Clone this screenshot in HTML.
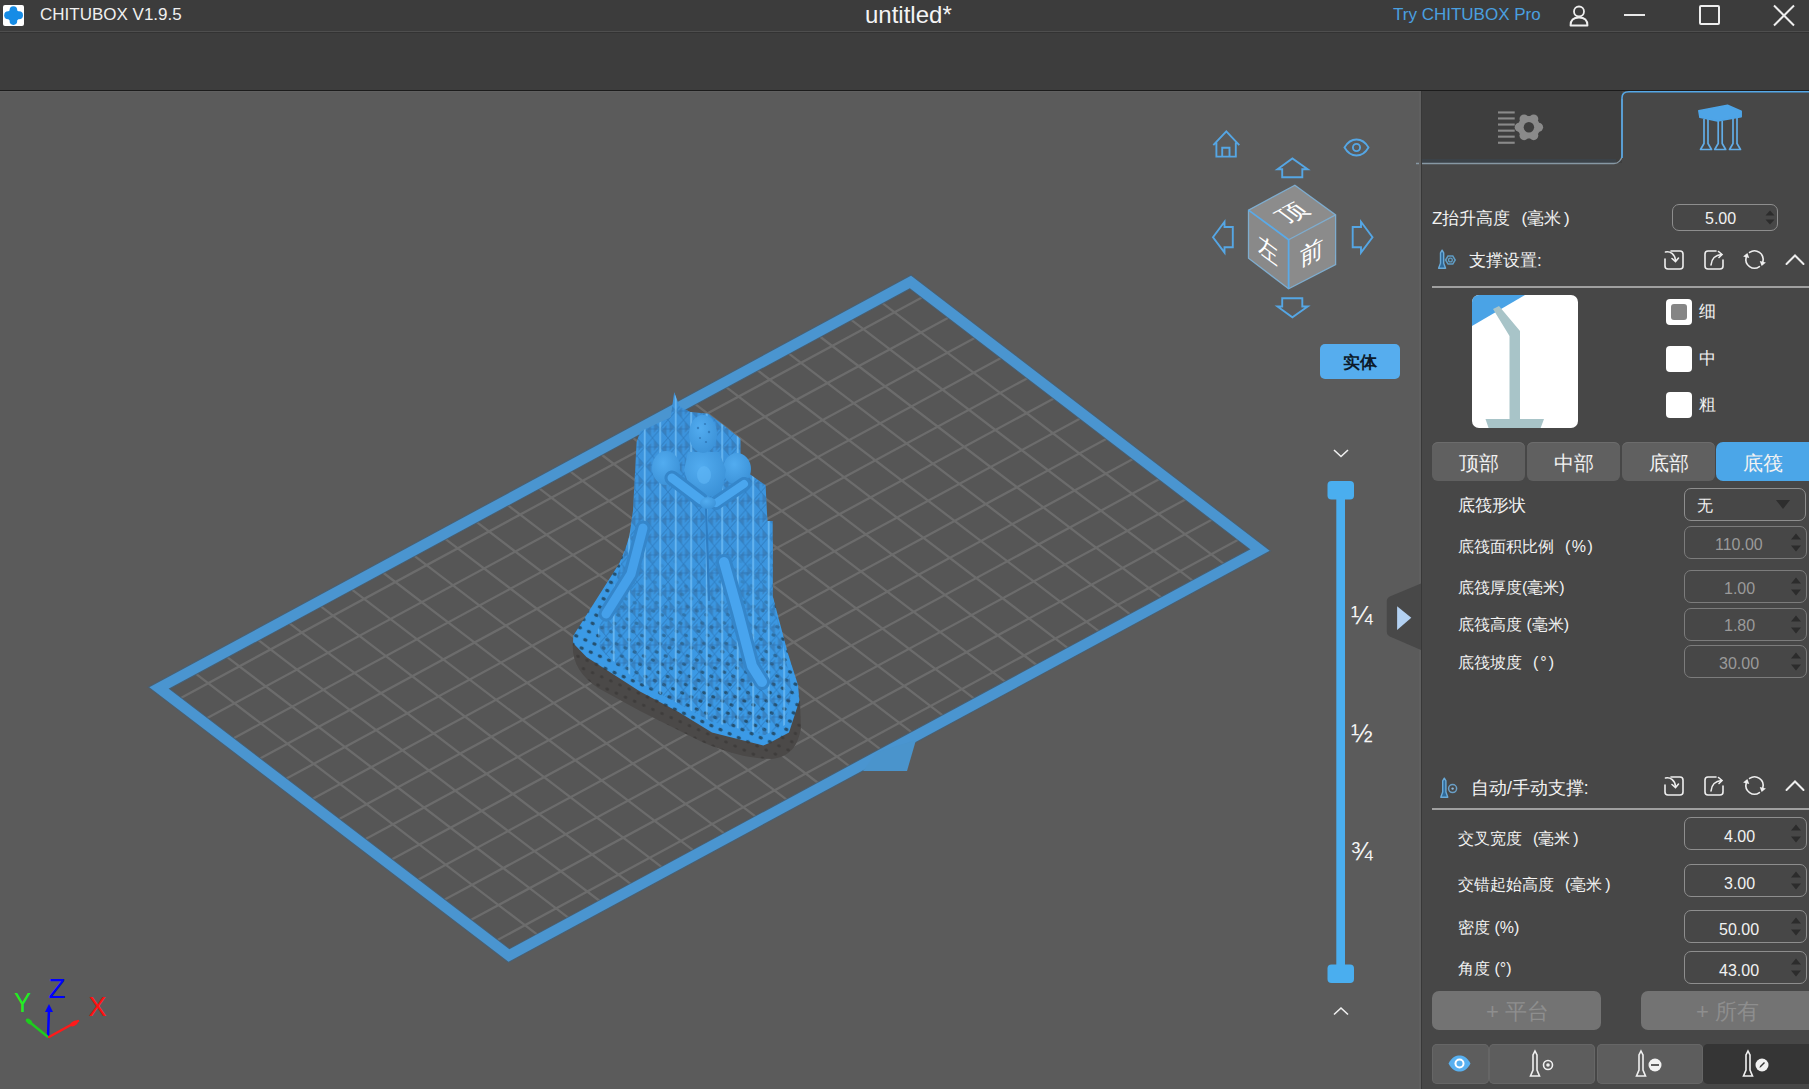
<!DOCTYPE html>
<html><head><meta charset="utf-8">
<style>
*{margin:0;padding:0;box-sizing:border-box}
html,body{width:1809px;height:1089px;overflow:hidden;background:#5b5b5b;font-family:"Liberation Sans",sans-serif;color:#f2f2f2}
.a{position:absolute}
.t{position:absolute;white-space:nowrap;line-height:1}
#title{left:0;top:0;width:1809px;height:31px;background:#3c3c3c}
#tline{left:0;top:31px;width:1809px;height:1px;background:#4e4e4e;box-shadow:0 1px 0 #333}
#tool{left:0;top:33px;width:1809px;height:57px;background:#3d3d3d}
#tdark{left:0;top:90px;width:1809px;height:1px;background:#1c1c1c}
#view{left:0;top:91px;width:1421px;height:998px;background:#5b5b5b}
#panel{left:1421px;top:91px;width:388px;height:998px;background:#474747}
</style></head><body>
<div id="title" class="a"></div>
<div id="tline" class="a"></div>
<div id="tool" class="a"></div>
<div id="tdark" class="a"></div>
<!--TITLE-->
<div class="a" style="left:3px;top:5px;width:21px;height:21px;background:#fff;border-radius:2px"></div>
<svg class="a" style="left:3px;top:5px" width="21" height="21" viewBox="0 0 21 21"><g fill="#168ce6"><rect x="1.2" y="6.3" width="18.8" height="8" rx="4"/><rect x="6.6" y="1.3" width="7.6" height="18.6" rx="3.8"/><circle cx="10.4" cy="10.3" r="6.2"/></g></svg>
<div class="t" style="left:40px;top:6px;font-size:17px;color:#f0f0f0">CHITUBOX V1.9.5</div>
<div class="t" style="left:865px;top:3px;font-size:24px;color:#f4f4f4">untitled*</div>
<div class="t" style="left:1393px;top:6px;font-size:17px;color:#4aa0e0">Try CHITUBOX Pro</div>
<svg class="a" style="left:1566px;top:4px" width="26" height="24" viewBox="0 0 26 24" fill="none" stroke="#eeeeee" stroke-width="1.8"><circle cx="13" cy="7.5" r="5"/><path d="M4.5 21.5 C4.5 15.5 8 13.5 13 13.5 C18 13.5 21.5 15.5 21.5 21.5 Z" stroke-linejoin="round"/></svg>
<div class="a" style="left:1624px;top:14px;width:21px;height:2px;background:#e8e8e8"></div>
<div class="a" style="left:1699px;top:5px;width:21px;height:20px;border:2px solid #eeeeee;border-radius:2px"></div>
<svg class="a" style="left:1772px;top:4px" width="24" height="23" viewBox="0 0 24 23" stroke="#eeeeee" stroke-width="2"><path d="M2 1.5L22 21.5M22 1.5L2 21.5"/></svg>
<!--/TITLE-->

<div id="view" class="a"></div>
<div id="panel" class="a"></div>
<!--PANEL-->
<svg class="a" style="left:1410px;top:85px" width="399" height="90" viewBox="1410 85 399 90">
<rect x="1421" y="91" width="201" height="72" fill="#3e3e3e"/>
<rect x="1421" y="159" width="195" height="4" fill="#3b4248"/>
<path d="M1416 163.5H1614C1618 163.5 1622 160 1622 155V99" fill="none" stroke="#8798a4" stroke-width="1.3"/>
<path d="M1622 158V98C1622 94 1624.5 91.8 1629 91.8H1809" fill="none" stroke="#55a8e8" stroke-width="1.6"/>
</svg>
<div class="a" style="left:1421px;top:91px;width:1px;height:998px;background:#383838"></div><div class="a" style="left:1419px;top:91px;width:2px;height:998px;background:#5f5f5f"></div><div class="a" style="left:0;top:91px;width:1421px;height:1px;background:#606060"></div>

<svg class="a" style="left:1490px;top:100px" width="60" height="55" viewBox="0 0 60 55">
<g fill="#8a8a8a"><rect x="8" y="11.4" width="16.7" height="2.1"/><rect x="8" y="17.4" width="16.7" height="2.1"/><rect x="8" y="23.5" width="16.7" height="2.1"/><rect x="8" y="29.6" width="16.7" height="2.1"/><rect x="8" y="35.6" width="16.7" height="2.1"/><rect x="8" y="41.7" width="16.7" height="2.1"/><circle cx="38.90" cy="27.30" r="11.2"/><circle cx="48.50" cy="27.30" r="4.6"/><circle cx="43.70" cy="35.61" r="4.6"/><circle cx="34.10" cy="35.61" r="4.6"/><circle cx="29.30" cy="27.30" r="4.6"/><circle cx="34.10" cy="18.99" r="4.6"/><circle cx="43.70" cy="18.99" r="4.6"/></g><circle cx="38.90" cy="27.30" r="5.2" fill="#3e3e3e"/>
</svg>
<svg class="a" style="left:1695px;top:102px" width="50" height="52" viewBox="0 0 50 52">
<g fill="none" stroke="#62ace6" stroke-width="1.7" stroke-linejoin="round"><path d="M9 17 V41.5 L5.5 47.5 H16.5 L13 41.5 V17"/><path d="M23.2 19 V41.5 L19.7 47.5 H30.7 L27.2 41.5 V19"/><path d="M38 15 V41.5 L34.5 47.5 H45.5 L42 41.5 V15"/></g>
<path d="M32.5 3.2 L3.8 8.7 L4.9 15.3 L22.5 19.1 L46.2 14.7 L46.2 9.2 Z" fill="#4ea5e8" stroke="#4ea5e8" stroke-width="1.5" stroke-linejoin="round"/>
</svg>

<div class="t" style="left:1432px;top:210px;font-size:17px">Z抬升高度<span style="margin-left:11px">(</span>毫米<span style="margin-left:3px">)</span></div>
<div class="a" style="left:1672px;top:204px;width:106px;height:27px;border:1.5px solid #8e8e8e;border-radius:7px"></div>
<div class="t" style="left:1705px;top:211px;font-size:16px">5.00</div>
<svg class="a" style="left:1764px;top:209px" width="12" height="18" viewBox="0 0 12 18" fill="#2c2c2c"><path d="M1.5 6.5L6 1.5L10.5 6.5Z M1.5 10.5L6 15.5L10.5 10.5Z"/></svg>

<!-- section header 1 -->
<svg class="a" style="left:1436px;top:248px" width="22" height="23" viewBox="0 0 22 23"><path d="M6.1 2.2 L7.7 4.8 V15.2 L9.6 20.2 H2.6 L4.5 15.2 V4.8 Z" fill="#2f6a9a" stroke="#6aaad8" stroke-width="1.4" stroke-linejoin="round"/><path d="M9.6 12L12 8 H16.8 L19.2 12 L16.8 16 H12 Z" fill="none" stroke="#5f9cc4" stroke-width="1.5"/><circle cx="14.4" cy="12" r="1.9" fill="none" stroke="#5f9cc4" stroke-width="1.3"/></svg>
<div class="t" style="left:1469px;top:252px;font-size:17px">支撑设置:</div>
<!-- header icons -->
<svg class="a" style="left:1663px;top:248px" width="144" height="24" viewBox="0 0 144 24" fill="none" stroke="#eeeeee" stroke-width="1.6" stroke-linecap="round">
<path d="M8 3 H17 A3 3 0 0 1 20 6 V18 A3 3 0 0 1 17 21 H5 A3 3 0 0 1 2 18 V11"/><path d="M2.5 4 C7 3 12 6 12.5 12.5"/><path d="M9 10.5 L12.5 13.5 L15.5 10"/>
<g transform="translate(40,0)"><path d="M13 3 H5 A3 3 0 0 0 2 6 V18 A3 3 0 0 0 5 21 H17 A3 3 0 0 0 20 18 V12"/><path d="M8 17 C8.5 11 12.5 7 18.5 6.5"/><path d="M15.5 3.5 L19 6.5 L16 9.5"/></g>
<g transform="translate(80,0)"><path d="M6.57 4.46A8.6 8.6 0 0 1 19.81 13.73"/><path d="M16.43 18.54A8.6 8.6 0 0 1 3.19 9.27"/><polygon points="22.90,14.55 16.72,12.90 18.64,18.07" fill="#eeeeee" stroke="none"/><polygon points="0.10,8.45 6.28,10.10 4.36,4.93" fill="#eeeeee" stroke="none"/></g>
<g transform="translate(121,0)"><path d="M2.5 16 L11 7.5 L19.5 16" stroke-width="2"/></g>
</svg>
<div class="a" style="left:1432px;top:286px;width:377px;height:1.5px;background:#a0a0a0"></div>

<!-- preview -->
<svg class="a" style="left:1472px;top:295px" width="106" height="133" viewBox="0 0 106 133">
<defs><clipPath id="pc"><rect width="106" height="133" rx="7"/></clipPath></defs>
<g clip-path="url(#pc)"><rect width="106" height="133" fill="#ffffff"/>
<polygon points="0,0 53,0 0,31" fill="#4aa3e6"/>
<polygon points="21,14 27,11 48,36 48,124 37.5,124 37.5,41" fill="#a8c4c8"/>
<polygon points="13.5,124 72,124 66,140 19,140" fill="#a8c4c8"/></g>
</svg>
<!-- checkboxes -->
<div class="a" style="left:1666px;top:299px;width:26px;height:26px;background:#fff;border-radius:4px"></div>
<div class="a" style="left:1671px;top:304px;width:16px;height:16px;background:#858585;border-radius:3px"></div>
<div class="a" style="left:1666px;top:346px;width:26px;height:26px;background:#fff;border-radius:4px"></div>
<div class="a" style="left:1666px;top:392px;width:26px;height:26px;background:#fff;border-radius:4px"></div>
<div class="t" style="left:1699px;top:303px;font-size:17px">细</div>
<div class="t" style="left:1699px;top:350px;font-size:17px">中</div>
<div class="t" style="left:1699px;top:396px;font-size:17px">粗</div>

<!-- segmented -->
<div class="a" style="left:1432px;top:442px;width:93px;height:39px;background:#606060;border-radius:6px;box-shadow:inset 0 1px 0 #6c6c6c"></div>
<div class="a" style="left:1527px;top:442px;width:93px;height:39px;background:#606060;border-radius:6px;box-shadow:inset 0 1px 0 #6c6c6c"></div>
<div class="a" style="left:1622px;top:442px;width:93px;height:39px;background:#606060;border-radius:6px;box-shadow:inset 0 1px 0 #6c6c6c"></div>
<div class="a" style="left:1716px;top:442px;width:100px;height:39px;background:#4ba6e8;border-radius:7px"></div>
<div class="t" style="left:1459px;top:453px;font-size:20px">顶部</div>
<div class="t" style="left:1554px;top:453px;font-size:20px">中部</div>
<div class="t" style="left:1649px;top:453px;font-size:20px">底部</div>
<div class="t" style="left:1743px;top:453px;font-size:20px">底筏</div>

<!-- raft rows -->
<div class="t" style="left:1458px;top:497px;font-size:16.5px">底筏形状</div>
<div class="a" style="left:1684px;top:488px;width:122px;height:33px;border:1.5px solid #8e8e8e;border-radius:7px"></div>
<div class="t" style="left:1697px;top:498px;font-size:16px">无</div>
<svg class="a" style="left:1774px;top:498px" width="18" height="13" viewBox="0 0 18 13"><path d="M2 2H16L9 11Z" fill="#2e2e2e"/></svg>

<div class="t" style="left:1458px;top:539px;font-size:16px">底筏面积比例<span style="margin-left:11px;letter-spacing:1.5px">(%)</span></div>
<div class="a" style="left:1684px;top:526px;width:123px;height:33px;border:1.5px solid #7c7c7c;border-radius:7px"></div>
<div class="t" style="left:1715px;top:537px;font-size:16px;color:#9a9a9a">110.00</div>
<svg class="a" style="left:1789px;top:531px" width="14" height="23" viewBox="0 0 14 23" fill="#2c2c2c"><path d="M2 8.5L7 2.5L12 8.5Z M2 14.5L7 20.5L12 14.5Z"/></svg>

<div class="t" style="left:1458px;top:580px;font-size:16px">底筏厚度(毫米)</div>
<div class="a" style="left:1684px;top:570px;width:123px;height:33px;border:1.5px solid #7c7c7c;border-radius:7px"></div>
<div class="t" style="left:1724px;top:581px;font-size:16px;color:#9a9a9a">1.00</div>
<svg class="a" style="left:1789px;top:575px" width="14" height="23" viewBox="0 0 14 23" fill="#2c2c2c"><path d="M2 8.5L7 2.5L12 8.5Z M2 14.5L7 20.5L12 14.5Z"/></svg>

<div class="t" style="left:1458px;top:617px;font-size:16px">底筏高度 (毫米)</div>
<div class="a" style="left:1684px;top:608px;width:123px;height:33px;border:1.5px solid #7c7c7c;border-radius:7px"></div>
<div class="t" style="left:1724px;top:618px;font-size:16px;color:#9a9a9a">1.80</div>
<svg class="a" style="left:1789px;top:613px" width="14" height="23" viewBox="0 0 14 23" fill="#2c2c2c"><path d="M2 8.5L7 2.5L12 8.5Z M2 14.5L7 20.5L12 14.5Z"/></svg>

<div class="t" style="left:1458px;top:655px;font-size:16px">底筏坡度<span style="margin-left:11px;letter-spacing:2px">(°)</span></div>
<div class="a" style="left:1684px;top:645px;width:123px;height:33px;border:1.5px solid #7c7c7c;border-radius:7px"></div>
<div class="t" style="left:1719px;top:656px;font-size:16px;color:#9a9a9a">30.00</div>
<svg class="a" style="left:1789px;top:650px" width="14" height="23" viewBox="0 0 14 23" fill="#2c2c2c"><path d="M2 8.5L7 2.5L12 8.5Z M2 14.5L7 20.5L12 14.5Z"/></svg>

<!-- section header 2 -->
<svg class="a" style="left:1438px;top:776px" width="22" height="24" viewBox="0 0 22 24"><path d="M6.3 2.2 L7.9 4.8 V16 L9.8 21.2 H2.8 L4.7 16 V4.8 Z" fill="#2f6a9a" stroke="#6aaad8" stroke-width="1.4" stroke-linejoin="round"/><circle cx="14.6" cy="12.6" r="4" fill="none" stroke="#6aa0c8" stroke-width="1.5"/><circle cx="14.6" cy="12.6" r="1.2" fill="#8ab8dc"/></svg>
<div class="t" style="left:1471px;top:780px;font-size:17.5px">自动/手动支撑:</div>
<svg class="a" style="left:1663px;top:774px" width="144" height="24" viewBox="0 0 144 24" fill="none" stroke="#eeeeee" stroke-width="1.6" stroke-linecap="round">
<path d="M8 3 H17 A3 3 0 0 1 20 6 V18 A3 3 0 0 1 17 21 H5 A3 3 0 0 1 2 18 V11"/><path d="M2.5 4 C7 3 12 6 12.5 12.5"/><path d="M9 10.5 L12.5 13.5 L15.5 10"/>
<g transform="translate(40,0)"><path d="M13 3 H5 A3 3 0 0 0 2 6 V18 A3 3 0 0 0 5 21 H17 A3 3 0 0 0 20 18 V12"/><path d="M8 17 C8.5 11 12.5 7 18.5 6.5"/><path d="M15.5 3.5 L19 6.5 L16 9.5"/></g>
<g transform="translate(80,0)"><path d="M6.57 4.46A8.6 8.6 0 0 1 19.81 13.73"/><path d="M16.43 18.54A8.6 8.6 0 0 1 3.19 9.27"/><polygon points="22.90,14.55 16.72,12.90 18.64,18.07" fill="#eeeeee" stroke="none"/><polygon points="0.10,8.45 6.28,10.10 4.36,4.93" fill="#eeeeee" stroke="none"/></g>
<g transform="translate(121,0)"><path d="M2.5 16 L11 7.5 L19.5 16" stroke-width="2"/></g>
</svg>
<div class="a" style="left:1432px;top:808px;width:377px;height:1.5px;background:#a0a0a0"></div>

<div class="t" style="left:1458px;top:831px;font-size:16px">交叉宽度<span style="margin-left:11px">(</span>毫米<span style="margin-left:3px">)</span></div>
<div class="a" style="left:1684px;top:817px;width:123px;height:33px;border:1.5px solid #8e8e8e;border-radius:7px"></div>
<div class="t" style="left:1724px;top:829px;font-size:16px">4.00</div>
<svg class="a" style="left:1789px;top:822px" width="14" height="23" viewBox="0 0 14 23" fill="#2c2c2c"><path d="M2 8.5L7 2.5L12 8.5Z M2 14.5L7 20.5L12 14.5Z"/></svg>

<div class="t" style="left:1458px;top:877px;font-size:16px">交错起始高度<span style="margin-left:11px">(</span>毫米<span style="margin-left:3px">)</span></div>
<div class="a" style="left:1684px;top:864px;width:123px;height:33px;border:1.5px solid #8e8e8e;border-radius:7px"></div>
<div class="t" style="left:1724px;top:876px;font-size:16px">3.00</div>
<svg class="a" style="left:1789px;top:869px" width="14" height="23" viewBox="0 0 14 23" fill="#2c2c2c"><path d="M2 8.5L7 2.5L12 8.5Z M2 14.5L7 20.5L12 14.5Z"/></svg>

<div class="t" style="left:1458px;top:920px;font-size:16px">密度 (%)</div>
<div class="a" style="left:1684px;top:910px;width:123px;height:33px;border:1.5px solid #8e8e8e;border-radius:7px"></div>
<div class="t" style="left:1719px;top:922px;font-size:16px">50.00</div>
<svg class="a" style="left:1789px;top:915px" width="14" height="23" viewBox="0 0 14 23" fill="#2c2c2c"><path d="M2 8.5L7 2.5L12 8.5Z M2 14.5L7 20.5L12 14.5Z"/></svg>

<div class="t" style="left:1458px;top:961px;font-size:16px">角度 (°)</div>
<div class="a" style="left:1684px;top:951px;width:123px;height:33px;border:1.5px solid #8e8e8e;border-radius:7px"></div>
<div class="t" style="left:1719px;top:963px;font-size:16px">43.00</div>
<svg class="a" style="left:1789px;top:956px" width="14" height="23" viewBox="0 0 14 23" fill="#2c2c2c"><path d="M2 8.5L7 2.5L12 8.5Z M2 14.5L7 20.5L12 14.5Z"/></svg>

<!-- buttons -->
<div class="a" style="left:1432px;top:991px;width:169px;height:39px;background:#737373;border-radius:7px"></div>
<div class="t" style="left:1486px;top:1001px;font-size:22px;color:#8e8e8e">+ 平台</div>
<div class="a" style="left:1641px;top:991px;width:175px;height:39px;background:#737373;border-radius:7px"></div>
<div class="t" style="left:1696px;top:1001px;font-size:22px;color:#8e8e8e">+ 所有</div>

<!-- bottom toolbar -->
<div class="a" style="left:1432px;top:1044px;width:57px;height:40px;background:#5d5d5d;border-radius:5px;box-shadow:inset 0 0 0 1px #666"></div>
<div class="a" style="left:1489px;top:1044px;width:106px;height:40px;background:#5d5d5d;border-radius:5px;box-shadow:inset 0 0 0 1px #666"></div>
<div class="a" style="left:1597px;top:1044px;width:106px;height:40px;background:#5d5d5d;border-radius:5px;box-shadow:inset 0 0 0 1px #666"></div>
<div class="a" style="left:1703px;top:1044px;width:110px;height:40px;background:#353535;border-radius:5px"></div>
<svg class="a" style="left:1447px;top:1054px" width="25" height="19" viewBox="0 0 25 19"><path d="M1.5 9.5 C5 3 9 1.5 12.5 1.5 C16 1.5 20 3 23.5 9.5 C20 16 16 17.5 12.5 17.5 C9 17.5 5 16 1.5 9.5Z" fill="#58b0f0"/><circle cx="12.5" cy="9.5" r="5" fill="#ffffff"/><circle cx="12.5" cy="9.5" r="3" fill="#58b0f0"/></svg>
<svg class="a" style="left:1529px;top:1049px" width="26" height="29" viewBox="0 0 26 29"><g fill="none" stroke="#f0f0f0" stroke-width="1.6"><path d="M6 2 L8 6 V21 L10.5 27 H1.5 L4 21 V6 Z"/><circle cx="19" cy="16" r="4.5"/></g><circle cx="19" cy="16" r="1.8" fill="#f0f0f0"/></svg>
<svg class="a" style="left:1635px;top:1049px" width="30" height="29" viewBox="0 0 30 29"><g fill="none" stroke="#f0f0f0" stroke-width="1.6"><path d="M6 2 L8 6 V21 L10.5 27 H1.5 L4 21 V6 Z"/></g><circle cx="20" cy="16" r="6.5" fill="#f0f0f0"/><rect x="16" y="15" width="8" height="2" fill="#5d5d5d"/></svg>
<svg class="a" style="left:1742px;top:1049px" width="30" height="29" viewBox="0 0 30 29"><g fill="none" stroke="#f0f0f0" stroke-width="1.6"><path d="M6 2 L8 6 V21 L10.5 27 H1.5 L4 21 V6 Z"/></g><circle cx="20" cy="16" r="6.5" fill="#f0f0f0"/><path d="M17.5 19 L18 17 L22 13 L23 14 L19 18 Z" fill="#353535"/></svg>
<!--/PANEL-->

<!--VIEW-->
<svg class="a" style="left:0;top:0" width="1421" height="1089" viewBox="0 0 1421 1089">
<polygon points="910.5,282 1260,550 509,955.5 159,688" fill="#565656"/>
<path d="M195.7 673.6L537.3 934.7M226.9 656.8L568.5 917.9M258.1 639.9L599.7 901.0M289.3 623.1L630.9 884.1M320.5 606.2L662.1 867.3M351.7 589.4L693.3 850.4M382.9 572.5L724.5 833.6M414.1 555.6L755.7 816.7M445.3 538.8L786.9 799.9M476.5 521.9L818.1 783.0M507.7 505.1L849.3 766.1M539.0 488.2L880.5 749.3M570.2 471.4L911.8 732.4M601.4 454.5L943.0 715.6M632.6 437.6L974.2 698.7M663.8 420.8L1005.4 681.9M695.0 403.9L1036.6 665.0M726.2 387.1L1067.8 648.1M757.4 370.2L1099.0 631.3M788.6 353.4L1130.2 614.4M819.8 336.5L1161.4 597.6M851.0 319.6L1192.6 580.7M882.2 302.8L1223.8 563.9M180.9 697.9L921.9 297.5M207.3 718.0L948.3 317.7M233.7 738.2L974.7 337.9M260.1 758.4L1001.0 358.1M286.5 778.6L1027.4 378.2M312.9 798.7L1053.8 398.4M339.3 818.9L1080.2 418.6M365.7 839.1L1106.6 438.8M392.1 859.3L1133.0 458.9M418.5 879.4L1159.4 479.1M444.8 899.6L1185.8 499.3M471.2 919.8L1212.2 519.5M497.6 940.0L1238.6 539.6" stroke="#6c6c6c" stroke-width="2.3" fill="none"/>
<polygon points="910.5,282 1260,550 509,955.5 159,688" fill="none" stroke="#44627a" stroke-width="12.5" stroke-linejoin="miter" opacity="0.8"/>
<polygon points="910.5,282 1260,550 509,955.5 159,688" fill="none" stroke="#4a95d0" stroke-width="10.5" stroke-linejoin="miter"/>
<polygon points="877,752 916,740 907,771 863,771" fill="#4a94cc"/>
<defs>
<pattern id="latp" width="15.5" height="18" patternUnits="userSpaceOnUse" x="637" y="420">
<path d="M1.5 2L6 7.5L1.5 13Z M14 5L9.5 10.5L14 16Z" fill="#34597e" opacity="0.32"/>
<path d="M0 0L7.75 9L0 18M15.5 0L7.75 9L15.5 18M0 9H15.5" stroke="#2a70b0" stroke-width="1" fill="none" opacity="0.55"/>
<rect x="7" y="0" width="1.4" height="18" fill="#7ac4f8" opacity="0.9"/>
</pattern>
<pattern id="holes" width="10" height="9" patternUnits="userSpaceOnUse" patternTransform="rotate(24)">
<rect width="10" height="9" fill="#3b9ae6"/>
<ellipse cx="5" cy="4.5" rx="2.2" ry="1.8" fill="#24506f"/>
</pattern>
<pattern id="sdots" width="10" height="9" patternUnits="userSpaceOnUse" patternTransform="rotate(24)">
<rect width="10" height="9" fill="#4b4948"/>
<ellipse cx="5" cy="4.5" rx="1.9" ry="1.5" fill="#3e3c3b"/>
</pattern>
<linearGradient id="basefade" x1="0" y1="400" x2="0" y2="700" gradientUnits="userSpaceOnUse">
<stop offset="0" stop-color="#3c93dc"/><stop offset="0.48" stop-color="#3c95de"/><stop offset="0.62" stop-color="#3b95de" stop-opacity="0.75"/><stop offset="0.85" stop-color="#3b95de" stop-opacity="0.3"/><stop offset="1" stop-color="#3b95de" stop-opacity="0"/>
</linearGradient>
<radialGradient id="fg" cx="0.4" cy="0.35" r="0.75"><stop offset="0" stop-color="#52acf0"/><stop offset="1" stop-color="#3a90d6"/></radialGradient>
</defs>
<!-- shadow -->
<path d="M573 642 C571 660 580 676 598 688 L640 711 L702 742 C730 754 752 759 772 759 C790 757 798 746 801 728 L800 700 L640 690 Z" fill="url(#sdots)"/>
<!-- raft -->
<polygon points="619.5,563 573.3,635.7 573,643 586.5,657 640,691.4 678.6,712 712,732.5 763.4,745.4 769.8,742.8 789,732.5 799.4,700.4 798,685 787.8,652.9 772.7,596 772.7,540 629,540" fill="url(#holes)"/>
<!-- lattice base -->
<polygon id="latpoly" points="674.2,392.2 679.6,406.5 690.4,411.9 708.3,413.7 722.6,424.4 740.5,438.7 740.5,467.4 765.6,485.3 767.4,521.1 772.7,521.1 772.7,596.3 782,640 792,690 785,725 765,735 712,722 640,683 600,650 598,630 610,600 629.5,535.4 633,510.4 636.6,442.3 640.2,431.6 670.7,417.2" fill="url(#basefade)"/>
<polygon points="674.2,392.2 679.6,406.5 690.4,411.9 708.3,413.7 722.6,424.4 740.5,438.7 740.5,467.4 765.6,485.3 767.4,521.1 772.7,521.1 772.7,596.3 782,640 792,690 785,725 765,735 712,722 640,683 600,650 598,630 610,600 629.5,535.4 633,510.4 636.6,442.3 640.2,431.6 670.7,417.2" fill="url(#latp)"/>
<!-- figure -->
<g stroke-linecap="round" stroke-linejoin="round" fill="none">
<path d="M643 528 L631 574 L606 614" stroke="#3586ca" stroke-width="15"/>
<path d="M643 528 L631 574 L606 614" stroke="#45a0ea" stroke-width="9"/>
<path d="M724 562 L738 612 L752 666 L762 682" stroke="#3586ca" stroke-width="16"/>
<path d="M724 562 L738 612 L752 666 L762 682" stroke="#48a4ee" stroke-width="10"/>
<path d="M706 506 L709 600" stroke="#2f7dc2" stroke-width="2.2"/>
</g>
<g fill="url(#fg)">
<ellipse cx="666" cy="468" rx="14" ry="17"/>
<ellipse cx="737" cy="469" rx="14" ry="16"/>
<path d="M688 452 L719 452 L726 470 L721 496 L692 496 L684 470 Z"/>
<ellipse cx="703" cy="434" rx="14" ry="19"/>
</g>
<g stroke-linecap="round" fill="none">
<path d="M672 478 L701 500" stroke="#3586ca" stroke-width="15"/>
<path d="M672 478 L701 500" stroke="#4aa6ee" stroke-width="9"/>
<path d="M744 484 L716 503" stroke="#3586ca" stroke-width="14"/>
<path d="M744 484 L716 503" stroke="#4aa6ee" stroke-width="8"/>
</g>
<ellipse cx="708" cy="503" rx="8" ry="6" fill="url(#fg)"/>
<ellipse cx="704" cy="475" rx="7" ry="9" fill="#60b8f6" opacity="0.6"/>
<g fill="#2a6eac" opacity="0.7"><circle cx="698" cy="428" r="1.2"/><circle cx="705" cy="424" r="1.1"/><circle cx="709" cy="432" r="1.2"/><circle cx="700" cy="438" r="1"/><circle cx="706" cy="442" r="1.1"/></g>
<!-- axis -->
<g stroke-linecap="round">
<line x1="48" y1="1037" x2="49" y2="1009" stroke="#0000ff" stroke-width="2.5"/>
<polygon points="45,1012 49,1004 53,1012" fill="#0000ff"/>
<line x1="48" y1="1037" x2="27" y2="1020" stroke="#1ecc1e" stroke-width="2.5"/><ellipse cx="29" cy="1021.5" rx="3.5" ry="2.2" transform="rotate(38 29 1021.5)" fill="#1ecc1e"/>
<line x1="49" y1="1037" x2="78" y2="1021" stroke="#ff1a1a" stroke-width="2.5"/><ellipse cx="74" cy="1023.5" rx="4" ry="2.3" transform="rotate(-28 74 1023.5)" fill="#ff1a1a"/>
</g>
<text x="14" y="1012" font-family="Liberation Sans" font-size="27.5" fill="#22ee22" textLength="17" lengthAdjust="spacingAndGlyphs">Y</text>
<text x="48.5" y="998" font-family="Liberation Sans" font-size="28.5" fill="#0000ff" textLength="17" lengthAdjust="spacingAndGlyphs">Z</text>
<text x="88.5" y="1015.5" font-family="Liberation Sans" font-size="27.5" fill="#ff1111" textLength="18" lengthAdjust="spacingAndGlyphs">X</text>
</svg>
<!--/VIEW-->
<!--NAV-->
<svg class="a" style="left:1190px;top:110px" width="231" height="979" viewBox="1190 110 231 979">
<g fill="none" stroke="#55a6e4" stroke-width="1.9" stroke-linejoin="miter">
<path d="M1213.3 145.1L1226.3 131.4L1239.3 145.1M1216.4 142.5V156.6H1235.8V142.5M1222.2 156.6V147.7H1229.5V156.6"/>
<path d="M1282.2 169.3H1277.5L1292.4 158.5L1307.7 169.3H1302.3V177.2H1282.2Z"/>
<path d="M1282.2 306.5H1277.5L1292.4 317.3L1307.7 306.5H1302.3V298.3H1282.2Z"/>
<path d="M1224.5 227V221.8L1213 237.2L1224.5 252.6V247.3H1232.8V227Z"/>
<path d="M1361 227V221.8L1372.5 237.2L1361 252.6V247.3H1352.7V227Z"/>
<path d="M1344.5 147.5C1348 141.5 1352 139.5 1356.5 139.5C1361 139.5 1365 141.5 1368.5 147.5C1365 153.5 1361 155.5 1356.5 155.5C1352 155.5 1348 153.5 1344.5 147.5Z"/>
<circle cx="1356.5" cy="147.5" r="3.6"/>
</g>
<!-- cube -->
<polygon points="1294.9,185.3 1248.5,210.1 1288.6,239.7 1335.6,214.9" fill="#8c8c8c"/>
<polygon points="1248.5,210.1 1288.6,239.7 1288.6,288.8 1248.5,258.2" fill="#898989"/>
<polygon points="1288.6,239.7 1335.6,214.9 1335.6,264.5 1288.6,288.8" fill="#8b8b8b"/>
<g fill="none" stroke="#7fb2d8" stroke-width="1.3" opacity="0.9">
<polygon points="1294.9,185.3 1335.6,214.9 1335.6,264.5 1288.6,288.8 1248.5,258.2 1248.5,210.1"/>
<path d="M1335.6 214.9L1288.6 239.7"/>
</g>
<path d="M1248.5 210.1L1288.6 239.7V288.8" fill="none" stroke="#5aaae8" stroke-width="1.8"/>
<g font-family="Liberation Sans" fill="#ffffff" font-size="50" text-anchor="middle">
<text transform="matrix(0.470,-0.248,0.401,0.296,1248.5,210.1)" x="50" y="68">顶</text>
<text transform="matrix(0.401,0.296,0,0.491,1248.5,210.1)" x="50" y="68">左</text>
<text transform="matrix(0.470,-0.248,0,0.491,1288.6,239.7)" x="50" y="68">前</text>
</g>
<!-- solid button -->
<rect x="1320" y="344" width="80" height="35" rx="5" fill="#56adee"/>
<text x="1359.5" y="368" font-family="Liberation Sans" font-size="17" font-weight="bold" fill="#0c1a2a" text-anchor="middle">实体</text>
<!-- slider -->
<path d="M1334 450L1341 456.5L1348 450" fill="none" stroke="#f0f0f0" stroke-width="1.6"/>
<path d="M1334 1014.5L1341 1008L1348 1014.5" fill="none" stroke="#f0f0f0" stroke-width="1.6"/>
<rect x="1336.3" y="495" width="8.7" height="475" fill="#4aaeef"/>
<rect x="1327.5" y="481" width="26.5" height="18.5" rx="4" fill="#4aaeef"/>
<rect x="1327.5" y="964.5" width="26.5" height="18.5" rx="4" fill="#4aaeef"/>
<g font-family="Liberation Sans" fill="#f4f4f4" font-size="26">
<text x="1351" y="624">¼</text>
<text x="1351" y="742">½</text>
<text x="1351" y="860">¾</text>
</g>
<!-- side tab -->
<path d="M1421 583.5L1391 596C1387.5 597.5 1386.8 599 1386.8 602V631C1386.8 634 1387.5 635.5 1391 637L1421 650Z" fill="#484848"/>
<polygon points="1397.1,606.3 1411.3,617.8 1397.1,630" fill="#b3d1f2"/>
</svg>
<!--/NAV-->

</body></html>
